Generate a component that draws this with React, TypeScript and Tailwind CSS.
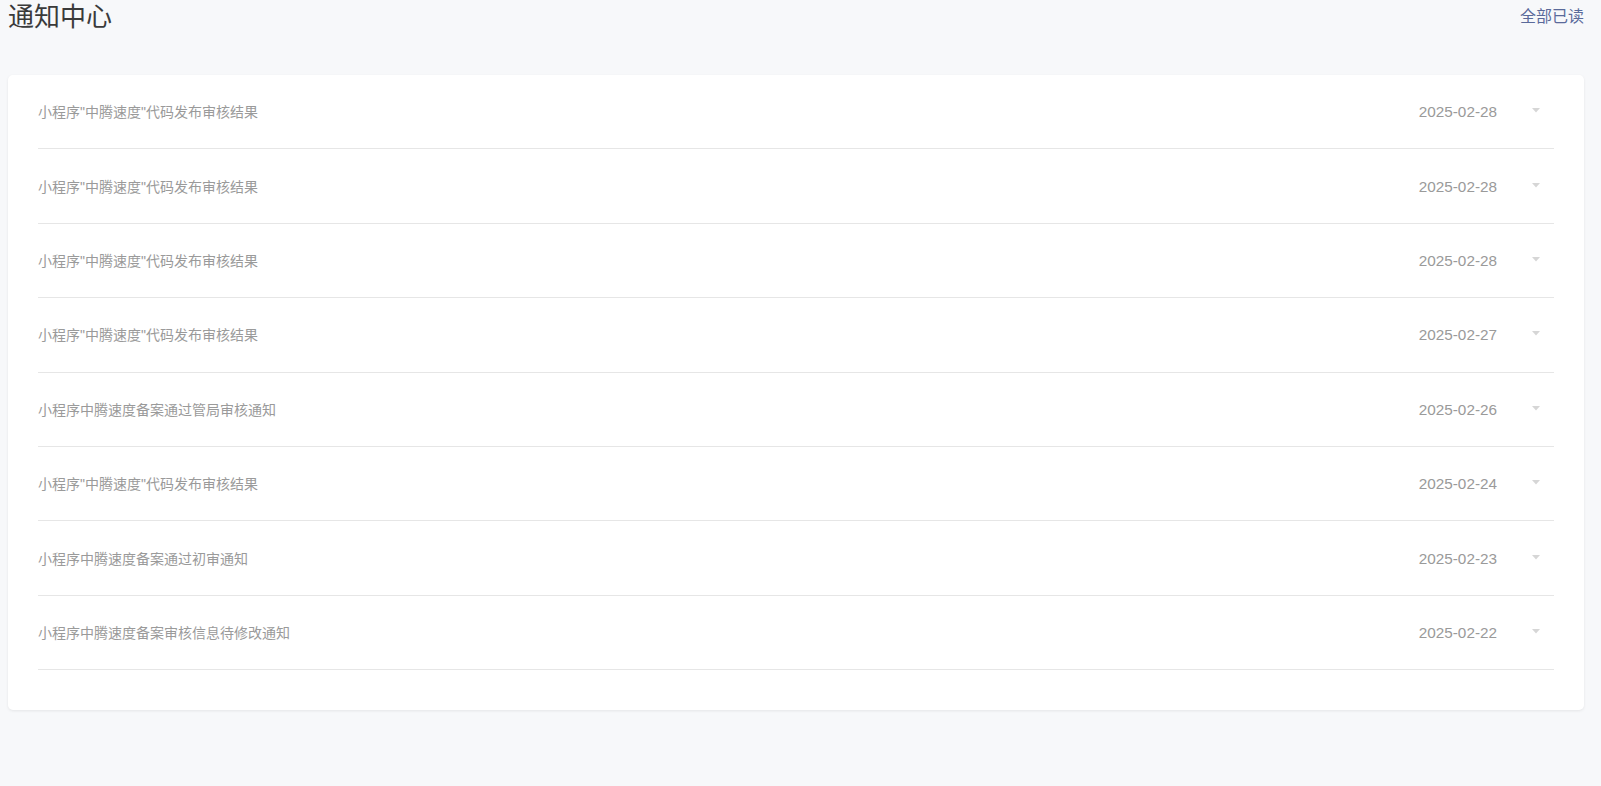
import React from "react";

const items = [
  { title: '小程序"中腾速度"代码发布审核结果', date: "2025-02-28" },
  { title: '小程序"中腾速度"代码发布审核结果', date: "2025-02-28" },
  { title: '小程序"中腾速度"代码发布审核结果', date: "2025-02-28" },
  { title: '小程序"中腾速度"代码发布审核结果', date: "2025-02-27" },
  { title: "小程序中腾速度备案通过管局审核通知", date: "2025-02-26" },
  { title: '小程序"中腾速度"代码发布审核结果', date: "2025-02-24" },
  { title: "小程序中腾速度备案通过初审通知", date: "2025-02-23" },
  { title: "小程序中腾速度备案审核信息待修改通知", date: "2025-02-22" },
];

function Caret() {
  return (
    <svg width="8" height="5" viewBox="0 0 8 5" className="-translate-y-[2px]">
      <polygon points="0,0 8,0 4,4.5" fill="#d6d6d6" />
    </svg>
  );
}

export default function App() {
  return (
    <div
      className="min-h-[786px] w-full bg-[#f7f8fa] pl-2 pr-[17px]"
      style={{ fontFamily: '"Liberation Sans", "Noto Sans CJK SC", sans-serif' }}
    >
      {/* Header */}
      <div className="flex h-[34px] items-center justify-between">
        <h1 className="text-[26px] leading-[32px] text-[#3a3a3a]">通知中心</h1>
        <button className="text-[16px] text-[#5a6a9a]">全部已读</button>
      </div>

      {/* List card */}
      <div className="mt-[41px] rounded-[5px] bg-white px-[30px] pb-[40px] shadow-[0_1px_3px_rgba(0,0,0,0.08)]">
        {items.map((item, i) => (
          <div
            key={i}
            className="flex h-[74.4px] items-center justify-between border-b border-[#e6e6e6] pt-[2px]"
          >
            <span className="text-[14px] text-[#9a9a9a]">{item.title}</span>
            <div className="flex items-center pr-[14px]">
              <span className="text-[15.3px] text-[#9a9a9a]">{item.date}</span>
              <span className="ml-[35px] flex items-center">
                <Caret />
              </span>
            </div>
          </div>
        ))}
      </div>
    </div>
  );
}
